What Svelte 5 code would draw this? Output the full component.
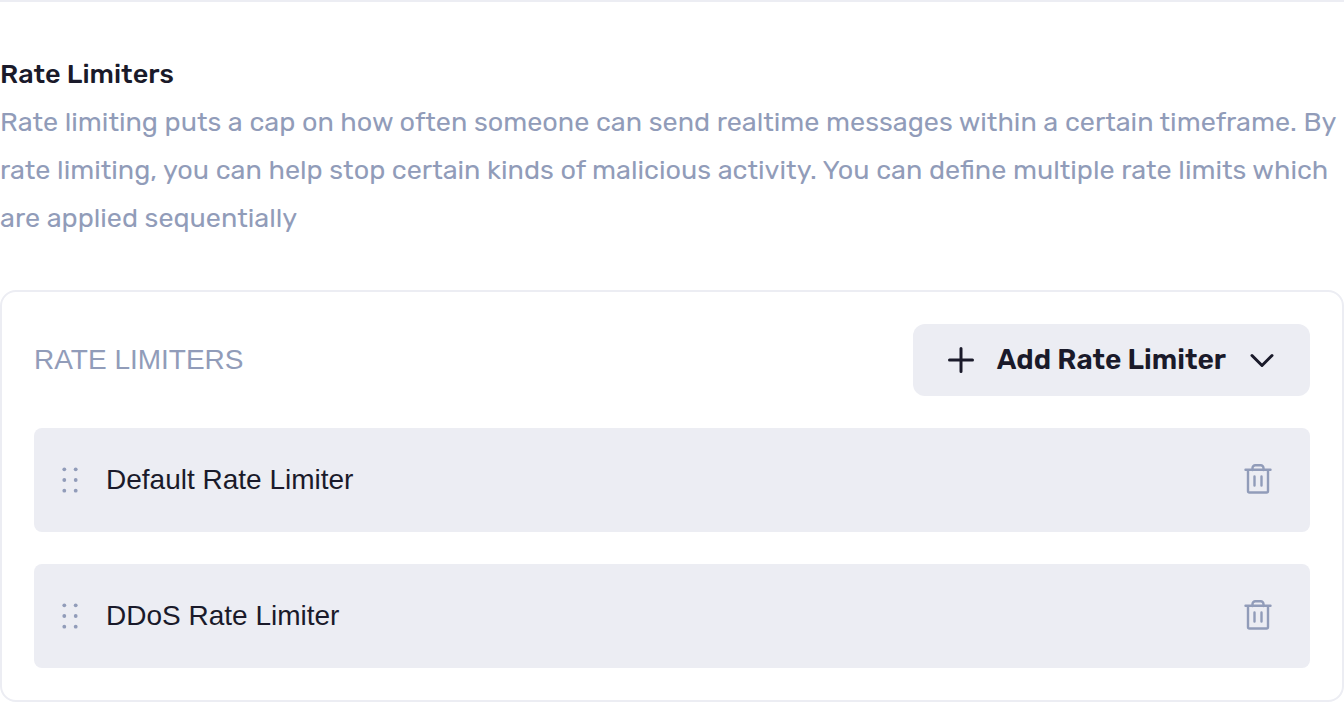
<script>
  let limiters = $state([
    { id: 1, name: 'Default Rate Limiter' },
    { id: 2, name: 'DDoS Rate Limiter' }
  ]);

  function remove(id) {
    limiters = limiters.filter((item) => item.id !== id);
  }
</script>

<section class="settings">
  <header class="intro">
    <h2>Rate Limiters</h2>
    <p>
      Rate limiting puts a cap on how often someone can send realtime messages within a certain timeframe. By
      rate limiting, you can help stop certain kinds of malicious activity. You can define multiple rate limits which
      are applied sequentially
    </p>
  </header>

  <div class="card">
    <div class="card-head">
      <h3>RATE LIMITERS</h3>
      <button class="add" type="button" aria-haspopup="menu">
        <svg class="plus" viewBox="0 0 28 28" aria-hidden="true">
          <path d="M14 2.500v23M2.500 14h23" />
        </svg>
        <span>Add Rate Limiter</span>
        <svg class="chevron" viewBox="0 0 24 24" aria-hidden="true">
          <path d="M2 7.500 12 17.500 22 7.500" />
        </svg>
      </button>
    </div>

    <ul>
      {#each limiters as item (item.id)}
        <li>
          <svg class="grip" viewBox="0 0 24 32" aria-hidden="true">
            {#each [5.3, 16, 26.7] as y}
              <circle cx="6.3" cy={y} r="1.9" />
              <circle cx="17.7" cy={y} r="1.9" />
            {/each}
          </svg>
          <span class="name">{item.name}</span>
          <button class="delete" type="button" aria-label={`Delete ${item.name}`} onclick={() => remove(item.id)}>
            <svg viewBox="0 0 32 32" aria-hidden="true">
              <path d="M3.500 5.800h25M6 6v21a1.500 1.500 0 0 0 1.500 1.500h17A1.500 1.500 0 0 0 26 27V6M10.500 6V4a2.700 2.700 0 0 1 2.700-2.700h5.600a2.700 2.700 0 0 1 2.700 2.700v2M12.500 12.500v9M19.500 12.500v9" />
            </svg>
          </button>
        </li>
      {/each}
    </ul>
  </div>
</section>

<style>
  :global(body) {
    margin: 0;
    background: #fff;
  }

  .settings {
    padding-top: 48px;
    border-top: 2px solid #ecedf3;
    color: #1a1a2a;
    font-family: Rubik, Roboto, sans-serif;
    font-size: 28px;
    line-height: 48px;
  }

  .intro {
    font-size: 27px;
  }

  h2,
  h3,
  p,
  ul {
    margin: 0;
    padding: 0;
    font-size: inherit;
  }

  h2 {
    font-weight: 500;
  }

  p {
    color: #919cb9;
  }

  .card {
    margin-top: 48px;
    padding: 32px;
    border: 2px solid #ecedf3;
    border-radius: 16px;
  }

  .card-head {
    display: flex;
    align-items: center;
    justify-content: space-between;
    margin-bottom: 32px;
  }

  h3,
  .name {
    font-family: "Liberation Sans", Arial, sans-serif;
    font-weight: 400;
  }

  h3 {
    color: #919cb9;
  }

  button {
    border: 0;
    color: inherit;
    font: inherit;
    cursor: pointer;
  }

  svg {
    display: block;
    flex: none;
    fill: none;
    stroke: currentColor;
    stroke-linecap: round;
    stroke-linejoin: round;
  }

  .add {
    display: flex;
    align-items: center;
    padding: 12px 36px 12px 34px;
    border-radius: 12px;
    background: #ecedf3;
    font-weight: 600;
  }

  .add span {
    margin: 0 24px 0 22px;
  }

  .plus {
    width: 28px;
    height: 28px;
    stroke-width: 3;
  }

  .chevron {
    width: 24px;
    height: 24px;
    stroke-width: 3;
  }

  ul {
    display: grid;
    gap: 32px;
    list-style: none;
  }

  li {
    display: flex;
    align-items: center;
    padding: 28px 36px 28px 24px;
    border-radius: 8px;
    background: #ecedf3;
  }

  .grip {
    width: 24px;
    height: 32px;
    fill: #919cb9;
    stroke: none;
  }

  .name {
    flex: 1;
    margin-left: 24px;
  }

  .delete {
    padding: 0;
    background: none;
    color: #919cb9;
  }

  .delete svg {
    width: 32px;
    height: 32px;
    stroke-width: 2.4;
  }
</style>
